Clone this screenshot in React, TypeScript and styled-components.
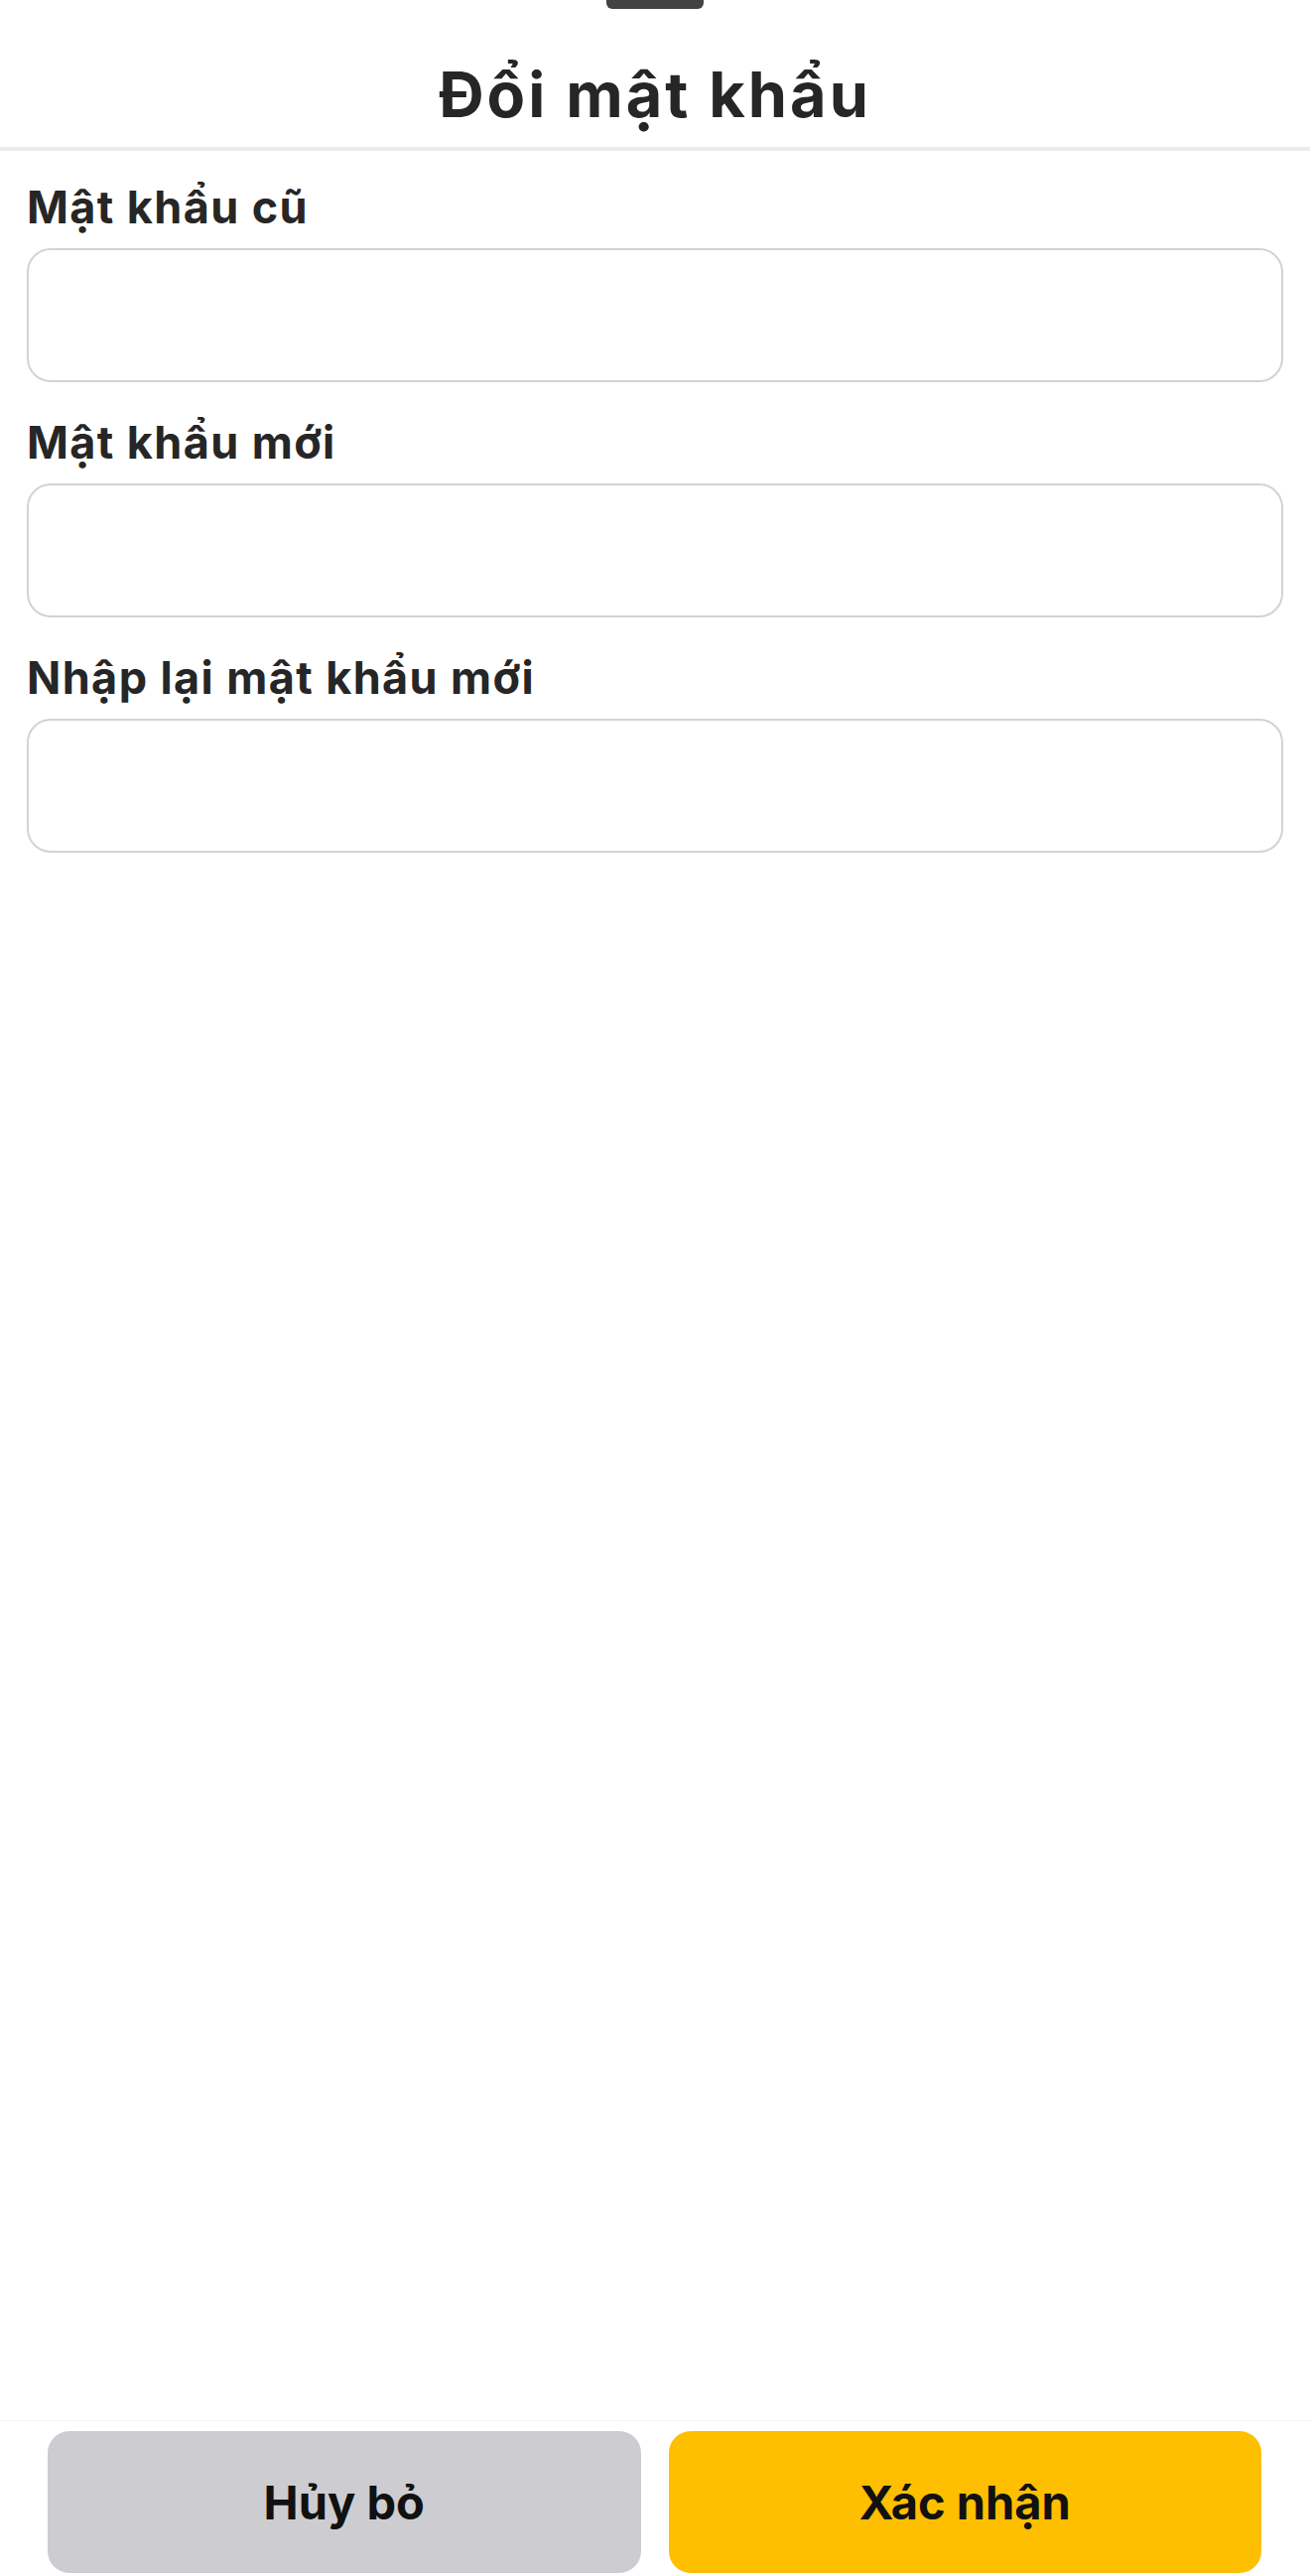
import React from "react";
import styled, { createGlobalStyle } from "styled-components";

const GlobalStyle = createGlobalStyle`
  html, body {
    margin: 0;
    padding: 0;
    background: #ffffff;
  }
  * {
    box-sizing: border-box;
  }
`;

const StyledSheet = styled.div`
  display: flex;
  flex-direction: column;
  width: 1320px;
  height: 2595px;
  background-color: #fff;
  font-family: "Inter", "Noto Sans", sans-serif;
  color: #262626;
  overflow: hidden;
`;

const StyledHeader = styled.header`
  display: flex;
  flex-direction: column;
  align-items: center;
  border-bottom: 4px solid #ebebeb;
  padding-bottom: 16px;
`;

const StyledHandle = styled.div`
  width: 98px;
  height: 9px;
  background-color: #454341;
  border-radius: 0 0 6px 6px;
`;

const StyledTitle = styled.h1`
  margin: 49px 0 0;
  font-size: 63px;
  line-height: 74px;
  font-weight: 700;
  letter-spacing: 3px;
  color: #262626;
`;

const StyledForm = styled.form`
  flex: 1;
  display: flex;
  flex-direction: column;
  padding: 30px 27px 0;
`;

const StyledField = styled.div`
  display: flex;
  flex-direction: column;
  gap: 14px;
  margin-bottom: 34px;
`;

const StyledLabel = styled.label`
  font-size: 45px;
  line-height: 54px;
  font-weight: 700;
  letter-spacing: 1.4px;
  color: #262626;
`;

const StyledInput = styled.input`
  height: 135px;
  width: 100%;
  border: 2.5px solid #d3d3d3;
  border-radius: 24px;
  background: #fff;
  font-family: inherit;
  font-size: 45px;
  padding: 0 30px;
  outline: none;
`;

const StyledFooter = styled.footer`
  display: flex;
  gap: 28px;
  padding: 10px 49px 3px 48px;
  border-top: 1px solid #f3f3f3;
`;

const StyledButton = styled.button<{ $primary?: boolean }>`
  flex: 1;
  height: 143px;
  border: none;
  border-radius: 22px;
  background-color: ${(p) => (p.$primary ? "#fdbf00" : "#cdcdd1")};
  color: #111;
  font-family: inherit;
  font-size: 47px;
  font-weight: 700;
  cursor: pointer;
`;

const fields = ["Mật khẩu cũ", "Mật khẩu mới", "Nhập lại mật khẩu mới"];

const App = () => {
  return (
    <>
      <GlobalStyle />
      <StyledSheet>
        <StyledHeader>
          <StyledHandle />
          <StyledTitle>Đổi mật khẩu</StyledTitle>
        </StyledHeader>
        <StyledForm onSubmit={(e) => e.preventDefault()}>
          {fields.map((label, i) => (
            <StyledField key={label}>
              <StyledLabel htmlFor={`pw-${i}`}>{label}</StyledLabel>
              <StyledInput id={`pw-${i}`} type="password" />
            </StyledField>
          ))}
        </StyledForm>
        <StyledFooter>
          <StyledButton type="button">Hủy bỏ</StyledButton>
          <StyledButton type="button" $primary>
            Xác nhận
          </StyledButton>
        </StyledFooter>
      </StyledSheet>
    </>
  );
};

export default App;
